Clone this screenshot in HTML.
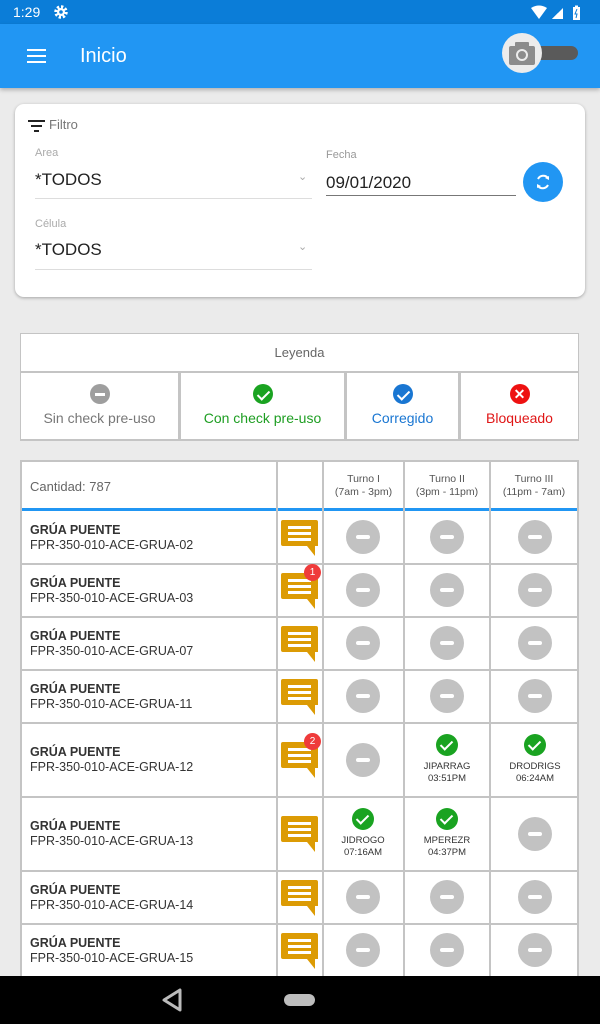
<!DOCTYPE html>
<html><head><meta charset="utf-8"><style>
*{margin:0;padding:0;box-sizing:border-box}
body{width:600px;height:1024px;background:#ebebeb;font-family:"Liberation Sans",sans-serif;position:relative;overflow:hidden}
.a{position:absolute}
.vl{position:absolute;width:2px;background:#c4c4c4}
.hl{position:absolute;height:2px;background:#c4c4c4;left:20px;width:559px}
.min{position:absolute;width:34px;height:34px;border-radius:50%;background:#c2c2c2}
.min:after{content:"";position:absolute;left:10px;top:15px;width:14px;height:4px;border-radius:2px;background:#fff}
.chk{position:absolute;width:22px;height:22px;border-radius:50%;background:#1aa321}
.chk:after{content:"";position:absolute;left:7px;top:4px;width:5px;height:10px;border:solid #fff;border-width:0 2.5px 2.5px 0;transform:rotate(45deg)}
.nm{position:absolute;left:30px;font-size:12.5px;color:#333;line-height:15px}
.nm b{color:#333}
.who{position:absolute;font-size:9.5px;color:#333;text-align:center;line-height:12px;width:86px}
.chat{position:absolute;width:38px;height:38px}
.badge{position:absolute;width:17px;height:17px;border-radius:50%;background:#ef3b3b;color:#fff;font-size:10px;text-align:center;line-height:17px}
</style></head><body>
<div class="a" style="left:0;top:0;width:600px;height:24px;background:#0b7dd8"></div>
<div class="a" style="left:13px;top:4px;color:#fff;font-size:14px">1:29</div>
<svg class="a" style="left:53px;top:4px" width="16" height="16" viewBox="0 0 16 16"><circle cx="8" cy="8" r="5" fill="none" stroke="#fff" stroke-width="3.5" stroke-dasharray="2.2 1.7"/><circle cx="8" cy="8" r="4" fill="#fff"/><circle cx="8" cy="8" r="1.8" fill="#0b7dd8"/></svg>
<svg class="a" style="left:530px;top:5px" width="60" height="16" viewBox="0 0 60 16"><path d="M1 3 Q9 -2 17 3 L9 14 Z" fill="#fff"/><path d="M22 14 L33 3 L33 14 Z" fill="#fff"/><path d="M22 14 L28 8 L28 14Z" fill="#fff"/><rect x="43" y="2" width="7" height="13" fill="#fff"/><rect x="45" y="0.5" width="3" height="2" fill="#fff"/><path d="M47 4 L45 9 L47 9 L46 13" stroke="#0b7dd8" fill="none"/></svg>
<div class="a" style="left:0;top:24px;width:600px;height:64px;background:#2196f3;box-shadow:0 2px 4px rgba(0,0,0,.25)"></div>
<div class="a" style="left:27px;top:49px;width:19px;height:2px;background:#fff;box-shadow:0 6px 0 #fff,0 12px 0 #fff"></div>
<div class="a" style="left:80px;top:45px;color:#fff;font-size:20px">Inicio</div>
<div class="a" style="left:520px;top:46px;width:58px;height:14px;border-radius:7px;background:#5a5a5a"></div>
<div class="a" style="left:502px;top:33px;width:40px;height:40px;border-radius:50%;background:#ececec"></div>
<svg class="a" style="left:508px;top:40px" width="28" height="26" viewBox="0 0 28 26"><rect x="1" y="6" width="26" height="19" rx="2" fill="#8c8c8c"/><rect x="7" y="2" width="14" height="6" rx="1" fill="#8c8c8c"/><circle cx="14" cy="15" r="5" fill="none" stroke="#ececec" stroke-width="2"/></svg>

<div class="a" style="left:15px;top:104px;width:570px;height:193px;background:#fff;border-radius:9px;box-shadow:0 1px 3px rgba(0,0,0,.3)"></div>
<div class="a" style="left:28px;top:120px;width:17px;height:2px;background:#222;box-shadow:none"></div>
<div class="a" style="left:31px;top:125px;width:11px;height:2px;background:#222"></div>
<div class="a" style="left:34px;top:130px;width:5px;height:2px;background:#222"></div>
<div class="a" style="left:49px;top:117px;font-size:13px;color:#777">Filtro</div>
<div class="a" style="left:35px;top:147px;font-size:11px;color:#aaa">Area</div>
<div class="a" style="left:35px;top:170px;font-size:17px;color:#222">*TODOS</div>
<div class="a" style="left:298px;top:170px;font-size:11px;color:#aaa">&#8964;</div>
<div class="a" style="left:35px;top:198px;width:277px;height:1px;background:#ddd"></div>
<div class="a" style="left:35px;top:218px;font-size:11px;color:#aaa">Célula</div>
<div class="a" style="left:35px;top:240px;font-size:17px;color:#222">*TODOS</div>
<div class="a" style="left:298px;top:240px;font-size:11px;color:#aaa">&#8964;</div>
<div class="a" style="left:35px;top:269px;width:277px;height:1px;background:#ddd"></div>
<div class="a" style="left:326px;top:149px;font-size:11px;color:#999">Fecha</div>
<div class="a" style="left:326px;top:173px;font-size:17px;color:#222">09/01/2020</div>
<div class="a" style="left:326px;top:195px;width:190px;height:1px;background:#777"></div>
<div class="a" style="left:523px;top:162px;width:40px;height:40px;border-radius:50%;background:#2196f3"></div>
<svg class="a" style="left:531px;top:170px" width="24" height="24" viewBox="0 0 24 24"><path d="M7 9 A6 6 0 0 1 17 8" fill="none" stroke="#fff" stroke-width="2"/><path d="M17 15 A6 6 0 0 1 7 16" fill="none" stroke="#fff" stroke-width="2"/><path d="M14 8 L18 6 L18 10Z" fill="#fff"/><path d="M10 16 L6 18 L6 14Z" fill="#fff"/></svg>

<!-- legend -->
<div class="a" style="left:20px;top:333px;width:559px;height:108px;background:#c4c4c4"></div>
<div class="a" style="left:21px;top:334px;width:557px;height:37px;background:#fff;text-align:center;line-height:37px;font-size:13px;color:#666">Leyenda</div>
<div class="a" style="left:21px;top:373px;width:157px;height:66px;background:#fff;text-align:center;font-size:14px;color:#777"><div style="width:20px;height:20px;border-radius:50%;background:#9e9e9e;margin:11px auto 6px;position:relative"><div style="position:absolute;left:5px;top:8.5px;width:10px;height:3px;background:#fff"></div></div>Sin check pre-uso</div>
<div class="a" style="left:181px;top:373px;width:163px;height:66px;background:#fff;text-align:center;font-size:14px;color:#1e9e22"><div class="chk" style="position:relative;width:20px;height:20px;margin:11px auto 6px"></div>Con check pre-uso</div>
<div class="a" style="left:347px;top:373px;width:111px;height:66px;background:#fff;text-align:center;font-size:14px;color:#1976d2"><div class="chk" style="position:relative;width:20px;height:20px;margin:11px auto 6px;background:#1976d2"></div>Corregido</div>
<div class="a" style="left:461px;top:373px;width:117px;height:66px;background:#fff;text-align:center;font-size:14px;color:#e01616"><div style="position:relative;width:20px;height:20px;border-radius:50%;background:#ee1111;margin:11px auto 6px;color:#fff;font-size:14px;line-height:20px;font-weight:bold">✕</div>Bloqueado</div>

<!-- table -->
<div class="a" style="left:20px;top:461px;width:559px;height:515px;background:#fff"></div>
<div class="hl" style="top:460px"></div>
<div class="a" style="left:20px;top:508px;width:559px;height:3px;background:#2196f3"></div>
<div class="hl" style="top:563px"></div><div class="hl" style="top:616px"></div><div class="hl" style="top:669px"></div><div class="hl" style="top:722px"></div><div class="hl" style="top:796px"></div><div class="hl" style="top:870px"></div><div class="hl" style="top:923px"></div>
<div class="vl" style="left:20px;top:461px;height:515px"></div>
<div class="vl" style="left:276px;top:461px;height:515px"></div>
<div class="vl" style="left:322px;top:461px;height:515px"></div>
<div class="vl" style="left:403px;top:461px;height:515px"></div>
<div class="vl" style="left:489px;top:461px;height:515px"></div>
<div class="vl" style="left:577px;top:461px;height:515px"></div>
<div class="a" style="left:30px;top:479px;font-size:13px;color:#666">Cantidad: 787</div>
<div class="a" style="left:323px;top:473px;width:81px;text-align:center;font-size:10.5px;color:#555;line-height:13px">Turno I<br>(7am - 3pm)</div>
<div class="a" style="left:404px;top:473px;width:86px;text-align:center;font-size:10.5px;color:#555;line-height:13px">Turno II<br>(3pm - 11pm)</div>
<div class="a" style="left:490px;top:473px;width:88px;text-align:center;font-size:10.5px;color:#555;line-height:13px">Turno III<br>(11pm - 7am)</div>

<svg width="0" height="0" style="position:absolute"><defs><g id="ch"><path d="M2 1 H35 Q37 1 37 3 V27 H34 V37 L26 27 H2 Q0 27 0 25 V3 Q0 1 2 1Z" fill="#dc9b04"/><rect x="7" y="7" width="23" height="3" fill="#fff"/><rect x="7" y="13" width="23" height="3" fill="#fff"/><rect x="7" y="19" width="23" height="3" fill="#fff"/></g></defs></svg>

<!-- rows -->
<div class="nm" style="top:523px"><b>GRÚA PUENTE</b><br>FPR-350-010-ACE-GRUA-02</div>
<svg class="chat" style="left:281px;top:519px"><use href="#ch"/></svg>
<div class="min" style="left:346px;top:520px"></div><div class="min" style="left:430px;top:520px"></div><div class="min" style="left:518px;top:520px"></div>

<div class="nm" style="top:576px"><b>GRÚA PUENTE</b><br>FPR-350-010-ACE-GRUA-03</div>
<svg class="chat" style="left:281px;top:572px"><use href="#ch"/></svg><div class="badge" style="left:304px;top:564px">1</div>
<div class="min" style="left:346px;top:573px"></div><div class="min" style="left:430px;top:573px"></div><div class="min" style="left:518px;top:573px"></div>

<div class="nm" style="top:629px"><b>GRÚA PUENTE</b><br>FPR-350-010-ACE-GRUA-07</div>
<svg class="chat" style="left:281px;top:625px"><use href="#ch"/></svg>
<div class="min" style="left:346px;top:626px"></div><div class="min" style="left:430px;top:626px"></div><div class="min" style="left:518px;top:626px"></div>

<div class="nm" style="top:682px"><b>GRÚA PUENTE</b><br>FPR-350-010-ACE-GRUA-11</div>
<svg class="chat" style="left:281px;top:678px"><use href="#ch"/></svg>
<div class="min" style="left:346px;top:679px"></div><div class="min" style="left:430px;top:679px"></div><div class="min" style="left:518px;top:679px"></div>

<div class="nm" style="top:745px"><b>GRÚA PUENTE</b><br>FPR-350-010-ACE-GRUA-12</div>
<svg class="chat" style="left:281px;top:741px"><use href="#ch"/></svg><div class="badge" style="left:304px;top:733px">2</div>
<div class="min" style="left:346px;top:743px"></div>
<div class="chk" style="left:436px;top:734px"></div><div class="who" style="left:404px;top:761px">JIPARRAG<br>03:51PM</div>
<div class="chk" style="left:524px;top:734px"></div><div class="who" style="left:492px;top:761px">DRODRIGS<br>06:24AM</div>

<div class="nm" style="top:819px"><b>GRÚA PUENTE</b><br>FPR-350-010-ACE-GRUA-13</div>
<svg class="chat" style="left:281px;top:815px"><use href="#ch"/></svg>
<div class="chk" style="left:352px;top:808px"></div><div class="who" style="left:320px;top:835px">JIDROGO<br>07:16AM</div>
<div class="chk" style="left:436px;top:808px"></div><div class="who" style="left:404px;top:835px">MPEREZR<br>04:37PM</div>
<div class="min" style="left:518px;top:817px"></div>

<div class="nm" style="top:883px"><b>GRÚA PUENTE</b><br>FPR-350-010-ACE-GRUA-14</div>
<svg class="chat" style="left:281px;top:879px"><use href="#ch"/></svg>
<div class="min" style="left:346px;top:880px"></div><div class="min" style="left:430px;top:880px"></div><div class="min" style="left:518px;top:880px"></div>

<div class="nm" style="top:936px"><b>GRÚA PUENTE</b><br>FPR-350-010-ACE-GRUA-15</div>
<svg class="chat" style="left:281px;top:932px"><use href="#ch"/></svg>
<div class="min" style="left:346px;top:933px"></div><div class="min" style="left:430px;top:933px"></div><div class="min" style="left:518px;top:933px"></div>

<div class="a" style="left:0;top:976px;width:600px;height:48px;background:#000"></div>
<svg class="a" style="left:158px;top:986px" width="30" height="28" viewBox="0 0 30 28"><path d="M22 4 L22 24 L6 14 Z" fill="none" stroke="#bbb" stroke-width="3" stroke-linejoin="round"/></svg>
<div class="a" style="left:284px;top:994px;width:31px;height:12px;border-radius:6px;background:#bdbdbd"></div>
</body></html>
